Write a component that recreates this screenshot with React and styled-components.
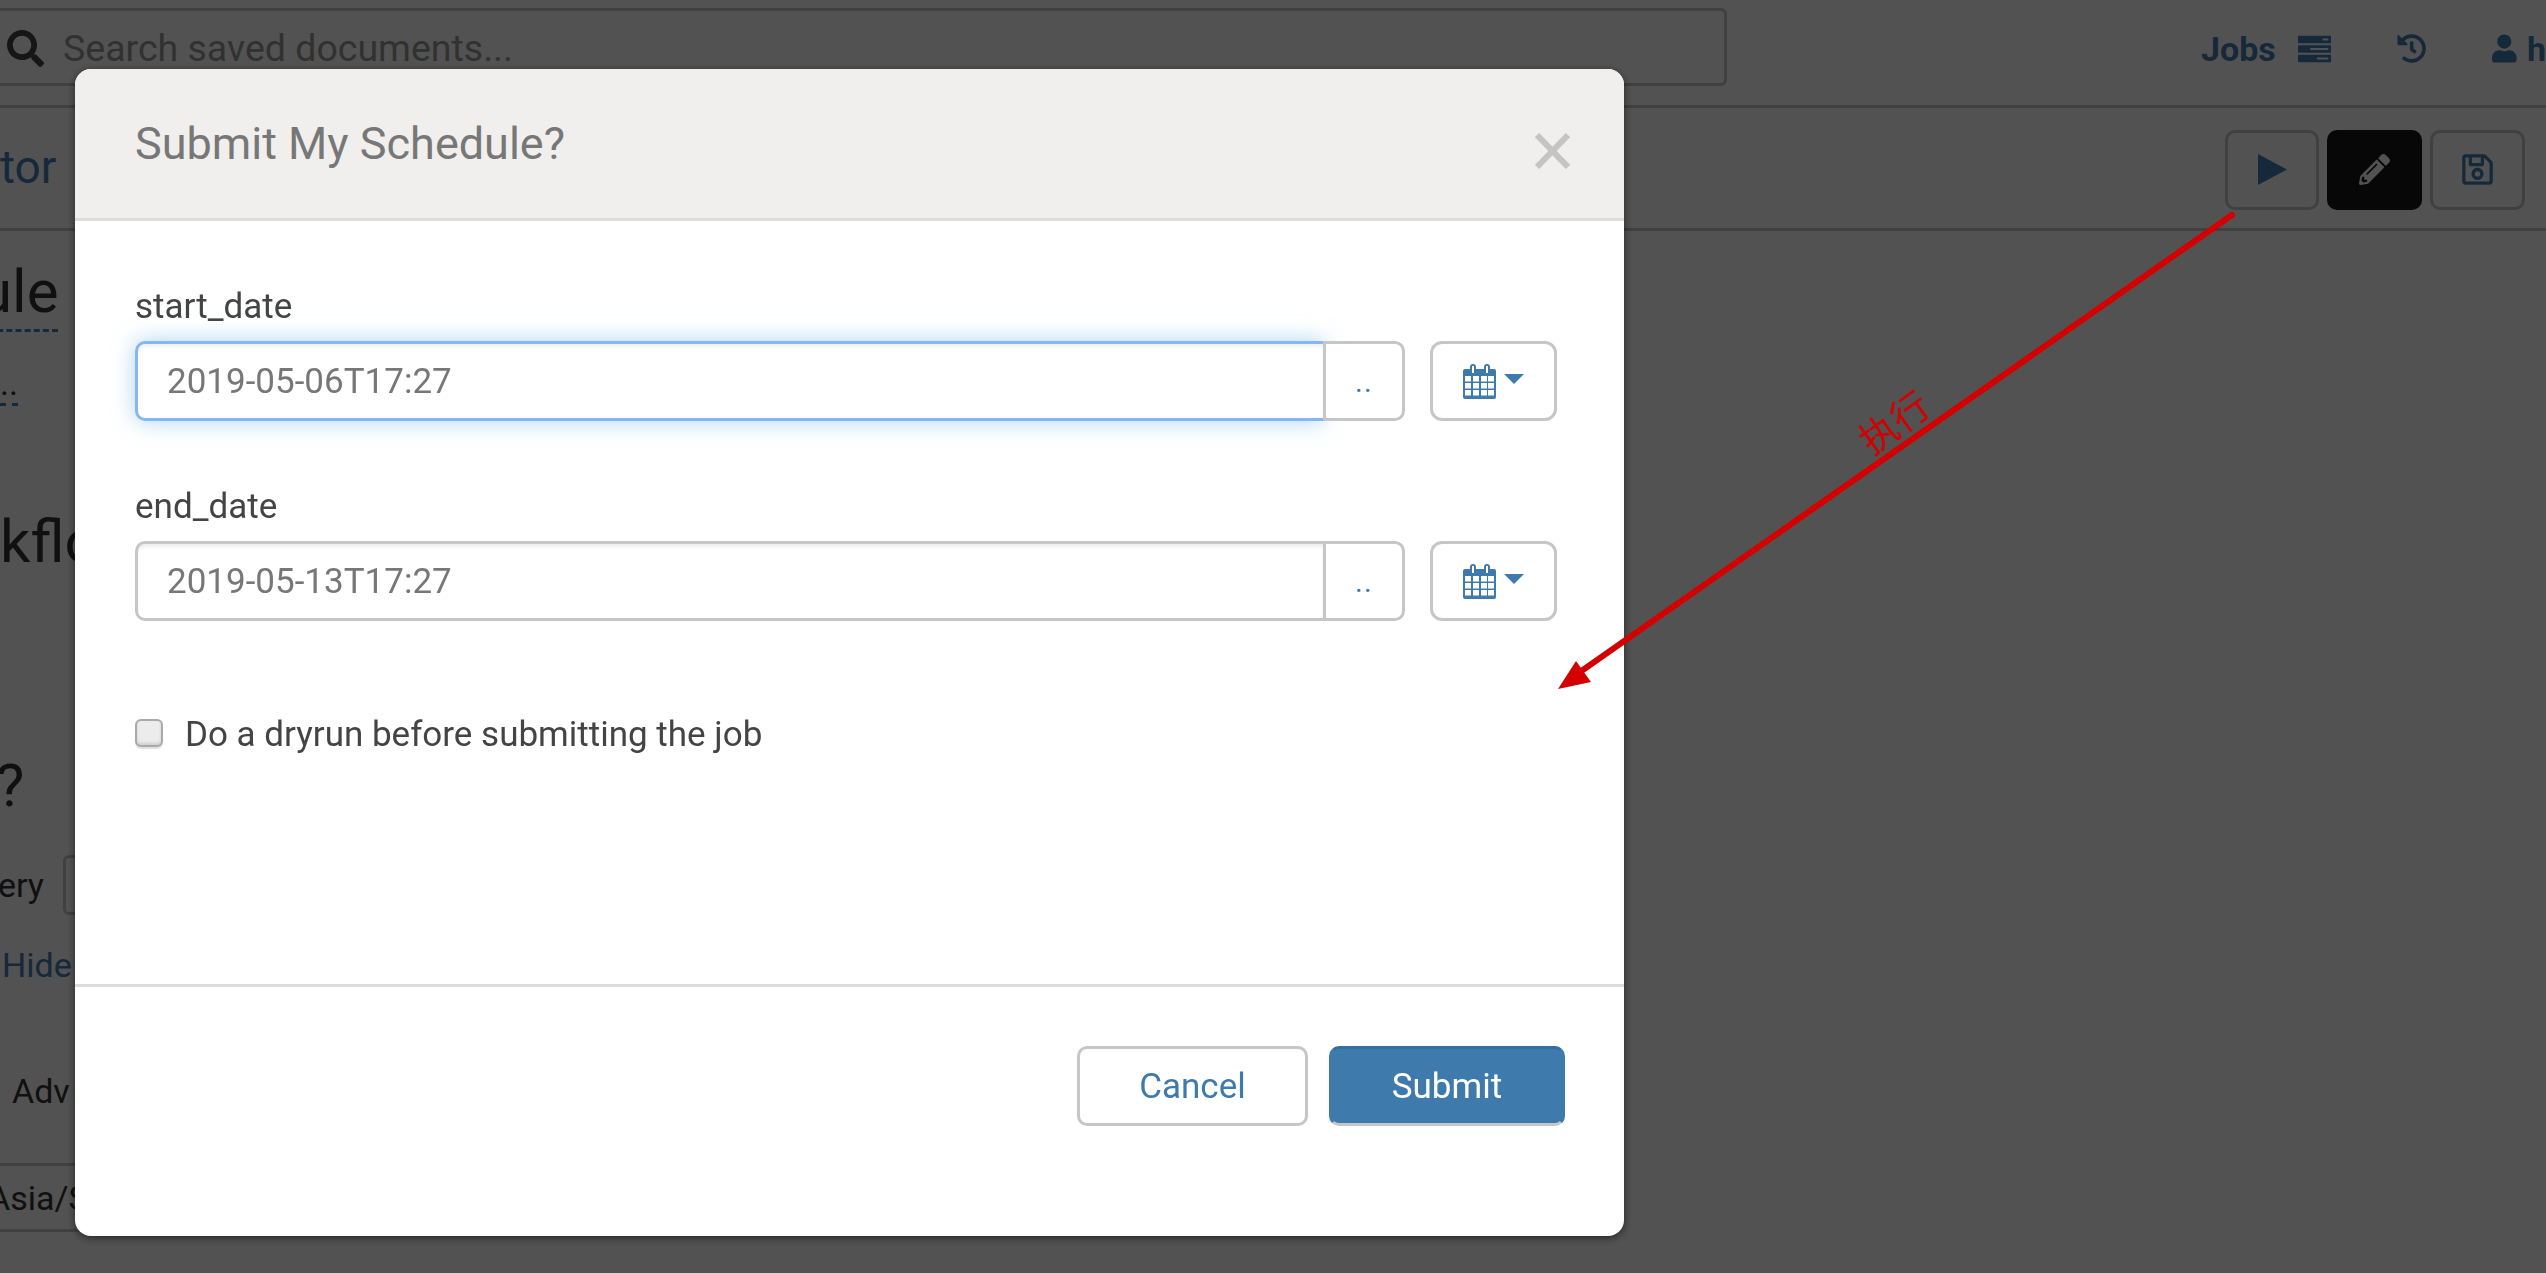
import React from "react";
import styled, { createGlobalStyle } from "styled-components";
import { FaSearch, FaHistory, FaPencilAlt, FaRegSave, FaUser } from "react-icons/fa";

const GlobalStyle = createGlobalStyle`
  html, body {
    margin: 0;
    height: 100%;
    overflow: hidden;
    background: #fff;
    font-family: Roboto, "Liberation Sans", sans-serif;
    color: #333;
  }
`;

const link = "#4480b4";
const primary = "#3e7bac";
const line = "#c6c6c6";

const Page = styled.div`
  width: 2546px;
  height: 1273px;
  overflow: hidden;
`;

const TopBar = styled.header`
  display: flex;
  padding-top: 8px;
  box-sizing: border-box;
  height: 108px;
  border-bottom: 3px solid ${line};
`;

const SearchBox = styled.div`
  width: 1737px;
  height: 78px;
  margin-left: -10px;
  box-sizing: border-box;
  border: 3px solid ${line};
  border-radius: 6px;
  display: flex;
  align-items: center;
  padding: 2px 0 0 14px;
  gap: 19px;
  font-size: 37.5px;
  color: #999;
  svg {
    width: 37px;
    height: 37px;
    color: #444;
  }
`;

const NavItems = styled.nav`
  margin-left: auto;
  display: flex;
  align-items: center;
  height: 78px;
  padding-top: 3px;
  box-sizing: border-box;
  font-size: 34px;
  font-weight: 700;
  color: ${link};
  width: 345px;
  flex: none;
  overflow: hidden;
`;

const JobsLabel = styled.span`
  margin-right: 22px;
`;

const HistoryIcon = styled(FaHistory)`
  width: 31px;
  height: 31px;
  margin: 0 66px 0 66px;
`;

const UserIcon = styled(FaUser)`
  width: 26px;
  height: 31px;
  margin-right: 10px;
`;

const Toolbar = styled.div`
  height: 123px;
  box-sizing: border-box;
  border-bottom: 3px solid ${line};
  display: flex;
  align-items: center;
  justify-content: space-between;
  padding-right: 21px;
`;

const ToolbarTitle = styled.span`
  font-size: 46px;
  margin-top: -3px;
  color: ${link};
`;

const ToolGroup = styled.div`
  display: flex;
  gap: 8px;
  margin-top: 3px;
`;

const ToolButton = styled.div`
  width: ${(p) => p.$width}px;
  height: 80px;
  box-sizing: border-box;
  border: 3px solid ${(p) => (p.$active ? "#161616" : line)};
  border-radius: 10px;
  background: ${(p) => (p.$active ? "#161616" : "#fff")};
  color: ${(p) => (p.$active ? "#fff" : link)};
  display: flex;
  align-items: center;
  justify-content: center;
  svg {
    width: ${(p) => p.$icon || 31}px;
    height: ${(p) => p.$icon || 31}px;
  }
`;

const Content = styled.main`
  display: flex;
  flex-direction: column;
  align-items: flex-start;
`;

const Heading = styled.div`
  font-size: 60px;
  line-height: 72px;
  color: #333;
  margin-top: ${(p) => p.$top}px;
  margin-left: ${(p) => p.$left || 0}px;
`;

const DottedHeading = styled(Heading)`
  border-bottom: 3px dashed ${link};
  height: 73px;
`;

const SmallLine = styled.div`
  font-size: 34px;
  line-height: 40px;
  color: ${(p) => p.$color || "#333"};
  margin-top: ${(p) => p.$top}px;
  margin-left: ${(p) => p.$left || 0}px;
`;

const DottedNote = styled(SmallLine)`
  border-bottom: 3px dashed ${link};
`;

const QueryRow = styled.div`
  display: flex;
  align-items: center;
  height: 60px;
  margin-top: 33px;
  margin-left: -2px;
  font-size: 34px;
`;

const QueryInput = styled.div`
  width: 100px;
  height: 60px;
  box-sizing: border-box;
  margin-left: 19px;
  border: 3px solid ${line};
  border-radius: 6px;
`;

const TimezoneCell = styled.div`
  width: 120px;
  height: 69px;
  margin-top: 52px;
  margin-left: -12px;
  box-sizing: border-box;
  border-top: 3px solid ${line};
  border-bottom: 3px solid ${line};
  display: flex;
  align-items: center;
  font-size: 34px;
`;

const Backdrop = styled.div`
  position: fixed;
  inset: 0;
  background: rgba(0, 0, 0, 0.68);
  padding: 69px 0 0 75px;
  box-sizing: border-box;
`;

const Modal = styled.section`
  width: 1549px;
  height: 1167px;
  background: #fff;
  border-radius: 16px;
  box-shadow: 0 2px 8px rgba(0, 0, 0, 0.55);
  display: flex;
  flex-direction: column;
  overflow: hidden;
`;

const ModalHeader = styled.div`
  height: 152px;
  box-sizing: border-box;
  flex: none;
  background: #f0efed;
  border-bottom: 3px solid #dcdcdc;
  display: flex;
  align-items: center;
  justify-content: space-between;
  padding: 0 54px 0 60px;
`;

const ModalTitle = styled.h3`
  margin: 0;
  font-size: 45px;
  font-weight: 400;
  color: #777;
`;

const CloseButton = styled.svg`
  width: 35px;
  height: 36px;
  margin-top: 14px;
  stroke: #c4c4c2;
  stroke-width: 6;
`;

const ModalBody = styled.div`
  flex: 1;
  padding: 64px 67px 0 60px;
`;

const Field = styled.div`
  margin-bottom: 64px;
`;

const FieldLabel = styled.label`
  display: block;
  font-size: 35px;
  line-height: 40px;
  padding-top: 2px;
  margin-bottom: 14px;
  color: #444;
`;

const FieldRow = styled.div`
  display: flex;
  height: 80px;
  gap: 25px;
`;

const InputGroup = styled.div`
  display: flex;
  flex: 1;
`;

const DateValue = styled.div`
  flex: 1;
  box-sizing: border-box;
  border: 3px solid ${(p) => (p.$focused ? "#85b7f0" : line)};
  border-right: none;
  border-radius: 10px 0 0 10px;
  box-shadow: ${(p) =>
    p.$focused
      ? "inset 0 3px 3px rgba(0,0,0,.06), 0 0 22px rgba(102,175,233,.55)"
      : "inset 0 3px 3px rgba(0,0,0,.07)"};
  padding-left: 29px;
  display: flex;
  align-items: center;
  font-size: 35px;
  color: #777;
`;

const DotsButton = styled.div`
  width: 82px;
  flex: none;
  box-sizing: border-box;
  border: 3px solid ${line};
  border-radius: 0 10px 10px 0;
  color: ${primary};
  font-size: 30px;
  display: flex;
  align-items: center;
  justify-content: center;
  letter-spacing: 1px;
  background: #fff;
`;

const CalendarButton = styled.div`
  width: 127px;
  flex: none;
  box-sizing: border-box;
  border: 3px solid ${line};
  border-radius: 12px;
  display: flex;
  align-items: center;
  justify-content: center;
  gap: 8px;
`;

const Caret = styled.span`
  width: 0;
  height: 0;
  margin-bottom: 4px;
  border-left: 10px solid transparent;
  border-right: 10px solid transparent;
  border-top: 10px solid ${primary};
`;

const CheckRow = styled.label`
  display: flex;
  align-items: center;
  gap: 22px;
  height: 40px;
  margin-top: 92px;
  font-size: 35px;
  color: #444;
`;

const CheckText = styled.span`
  margin-top: 2px;
`;

const CheckBox = styled.input`
  appearance: none;
  margin: 0;
  width: 28px;
  height: 28px;
  box-sizing: border-box;
  background: #ececec;
  border: 2px solid #a9a9a9;
  border-radius: 6px;
  box-shadow: inset 0 -2px 3px rgba(0, 0, 0, 0.12), 0 2px 0 #e2e2e2;
`;

const ModalFooter = styled.div`
  flex: none;
  height: 252px;
  box-sizing: border-box;
  border-top: 3px solid #dcdcdc;
  display: flex;
  justify-content: flex-end;
  gap: 21px;
  padding: 59px 59px 0 0;
`;

const ActionButton = styled.button`
  width: ${(p) => p.$width}px;
  height: 80px;
  box-sizing: border-box;
  border-radius: 10px;
  font-family: inherit;
  font-size: 35px;
  border: 3px solid ${(p) => (p.$primary ? primary : line)};
  border-top-color: ${(p) => (p.$primary ? "#336fa1" : line)};
  border-bottom-color: ${line};
  background: ${(p) => (p.$primary ? primary : "#fff")};
  color: ${(p) => (p.$primary ? "#fff" : primary)};
`;

const ArrowLayer = styled.svg`
  position: fixed;
  inset: 0;
  pointer-events: none;
`;

const Annotation = styled.span`
  position: fixed;
  left: 1855px;
  top: 396px;
  font-family: "Noto Sans CJK SC", sans-serif;
  font-size: 38px;
  line-height: 50px;
  color: #d40000;
  transform: rotate(-36deg);
`;

const CalendarIcon = () => (
  <svg width="33" height="35" viewBox="0 0 33 35">
    <rect x="0" y="5" width="33" height="30" rx="2" fill={primary} />
    <rect x="7" y="0" width="6" height="10" rx="3" fill={primary} />
    <rect x="21" y="0" width="6" height="10" rx="3" fill={primary} />
    <rect x="9" y="2" width="2" height="7" fill="#fff" />
    <rect x="23" y="2" width="2" height="7" fill="#fff" />
    {[12, 19, 26].map((y) =>
      [2, 10, 18, 25].map((x) => (
        <rect key={`${x}-${y}`} x={x} y={y} width="6" height="5.5" fill="#fff" />
      ))
    )}
  </svg>
);

const ServerIcon = () => (
  <svg width="35" height="28" viewBox="0 0 35 28" fill="currentColor">
    <path fillRule="evenodd" d="M1 0h33a1 1 0 0 1 1 1v6a1 1 0 0 1-1 1H1a1 1 0 0 1-1-1V1a1 1 0 0 1 1-1zm25 3v2h6V3z" />
    <path fillRule="evenodd" d="M1 10h33a1 1 0 0 1 1 1v6a1 1 0 0 1-1 1H1a1 1 0 0 1-1-1v-6a1 1 0 0 1 1-1zm12 3v2h19v-2z" />
    <path fillRule="evenodd" d="M1 20h33a1 1 0 0 1 1 1v6a1 1 0 0 1-1 1H1a1 1 0 0 1-1-1v-6a1 1 0 0 1 1-1zm19 3v2h12v-2z" />
  </svg>
);

const DateField = ({ label, value, focused }) => (
  <Field>
    <FieldLabel>{label}</FieldLabel>
    <FieldRow>
      <InputGroup>
        <DateValue $focused={focused}>{value}</DateValue>
        <DotsButton>..</DotsButton>
      </InputGroup>
      <CalendarButton>
        <CalendarIcon />
        <Caret />
      </CalendarButton>
    </FieldRow>
  </Field>
);

const App = () => {
  return (
    <Page>
      <GlobalStyle />
      <TopBar>
        <SearchBox>
          <FaSearch />
          Search saved documents...
        </SearchBox>
        <NavItems>
          <JobsLabel>Jobs</JobsLabel>
          <ServerIcon />
          <HistoryIcon />
          <UserIcon />
          h
        </NavItems>
      </TopBar>
      <Toolbar>
        <ToolbarTitle>tor</ToolbarTitle>
        <ToolGroup>
          <ToolButton $width={94}>
            <svg viewBox="0 0 29 31" fill="currentColor">
              <polygon points="0,0 29,15.5 0,31" />
            </svg>
          </ToolButton>
          <ToolButton $width={95} $active>
            <FaPencilAlt />
          </ToolButton>
          <ToolButton $width={95} $icon={35}>
            <FaRegSave />
          </ToolButton>
        </ToolGroup>
      </Toolbar>
      <Content>
        <DottedHeading $top={25} $left={-21}>ule</DottedHeading>
        <DottedNote $top={31}>..</DottedNote>
        <Heading $top={100}>kflo</Heading>
        <Heading $top={172} $left={-4}>?</Heading>
        <QueryRow>
          ery
          <QueryInput />
        </QueryRow>
        <SmallLine $top={30} $left={2} $color={link}>Hide</SmallLine>
        <SmallLine $top={86} $left={12}>Adv</SmallLine>
        <TimezoneCell>Asia/S</TimezoneCell>
      </Content>
      <Backdrop>
        <Modal>
          <ModalHeader>
            <ModalTitle>Submit My Schedule?</ModalTitle>
            <CloseButton viewBox="0 0 35 36">
              <line x1="2" y1="2" x2="33" y2="34" />
              <line x1="33" y1="2" x2="2" y2="34" />
            </CloseButton>
          </ModalHeader>
          <ModalBody>
            <DateField label="start_date" value="2019-05-06T17:27" focused />
            <DateField label="end_date" value="2019-05-13T17:27" />
            <CheckRow>
              <CheckBox type="checkbox" />
              <CheckText>Do a dryrun before submitting the job</CheckText>
            </CheckRow>
          </ModalBody>
          <ModalFooter>
            <ActionButton $width={231}>Cancel</ActionButton>
            <ActionButton $width={236} $primary>Submit</ActionButton>
          </ModalFooter>
        </Modal>
      </Backdrop>
      <ArrowLayer width="2546" height="1273" viewBox="0 0 2546 1273">
        <line x1="2232" y1="215" x2="1580" y2="672" stroke="#d40000" strokeWidth="6" strokeLinecap="round" />
        <polygon points="1558,689 1576,661 1591,682" fill="#d40000" />
      </ArrowLayer>
      <Annotation>执行</Annotation>
    </Page>
  );
};

export default App;
